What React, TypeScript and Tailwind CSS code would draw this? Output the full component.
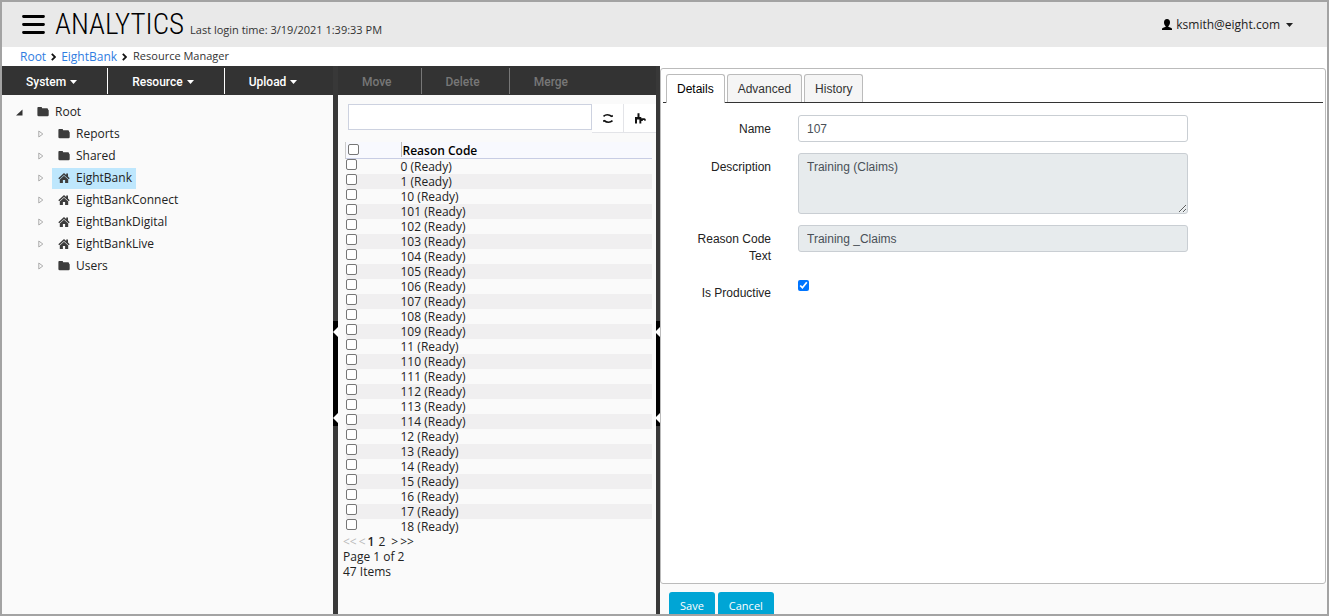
import React, { useState } from 'react';

const reasonCodes = [
  '0', '1', '10', '101', '102', '103', '104', '105', '106', '107', '108', '109', '11',
  '110', '111', '112', '113', '114', '12', '13', '14', '15', '16', '17', '18',
];

const treeItems = [
  { label: 'Reports', kind: 'folder' },
  { label: 'Shared', kind: 'folder' },
  { label: 'EightBank', kind: 'home' },
  { label: 'EightBankConnect', kind: 'home' },
  { label: 'EightBankDigital', kind: 'home' },
  { label: 'EightBankLive', kind: 'home' },
  { label: 'Users', kind: 'folder' },
];

function FolderIcon() {
  return (
    <svg className="h-[10px] w-3 shrink-0" viewBox="0 0 12 10" fill="#3c3c3c" aria-hidden="true">
      <path d="M1.2 0h3q.9 0 .9.9v.4h4.800q1.200 0 1.200 1.200v.3q.6.1.6.8v4.400q0 1.300-1.200 1.300H1.700Q.4 9.300.4 8V.9Q.4 0 1.200 0z" />
    </svg>
  );
}

function HomeIcon() {
  return (
    <svg className="h-[10px] w-3 shrink-0" viewBox="0 0 12 10" fill="#3c3c3c" aria-hidden="true">
      <path d="M6 0 0.300 5.200l1 1L6 2l4.700 4.200 1-1L10 3.600V.5H8.200v1.500z" />
      <path d="M6 2.700 1.800 6.500V10H4.900V7h2.200v3h3.100V6.500z" />
    </svg>
  );
}

function Caret() {
  return (
    <svg className="h-1 w-[7px]" viewBox="0 0 7 4" fill="currentColor" aria-hidden="true">
      <path d="M0 0h7L3.500 4z" />
    </svg>
  );
}

function Chevron() {
  return (
    <svg className="h-2 w-[5px]" viewBox="0 0 5 8" fill="none" stroke="#111" strokeWidth="1.8" aria-hidden="true">
      <path d="M0.800 0.800 4 4 0.800 7.200" />
    </svg>
  );
}

function Splitter({ className }: { className: string }) {
  return (
    <div role="separator" aria-orientation="vertical" className={`flex shrink-0 flex-col bg-[#383838] ${className}`}>
      <div className="grow-[255]" />
      <div className="flex h-[105px] flex-col items-end justify-between bg-black pt-1.5 pb-[3px]">
        {[0, 1].map((n) => (
          <svg key={n} className="h-2.5 w-[5px]" viewBox="0 0 5 10" fill="#fff" aria-hidden="true">
            <path d="M5 0v10L0 5z" />
          </svg>
        ))}
      </div>
      <div className="grow-[188]" />
    </div>
  );
}

const check =
  "block size-[11px] appearance-none rounded-[2px] border border-[#767676] bg-white checked:border-[#0075ff] checked:bg-[#0075ff]";

const field =
  'block w-full rounded-[3px] border border-[#c9ced3] px-2 text-xs text-[#495057]';

function Header() {
  return (
    <header className="flex h-[45px] shrink-0 items-center bg-[#e9e9e9]">
      <button aria-label="Menu" className="ml-5">
        <svg className="h-5 w-[23px]" viewBox="0 0 23 20" stroke="#000" strokeWidth="2.800" strokeLinecap="round" aria-hidden="true">
          <path d="M1.500 1.500h20M1.500 9.500h20M1.500 17.500h20" />
        </svg>
      </button>
      <div className="ml-2.5 flex items-baseline gap-1.5">
        <h1 className="font-['Roboto_Condensed','Roboto',sans-serif] text-[29px] leading-[45px] font-light text-black">
          ANALYTICS
        </h1>
        <p className="text-[11px] text-[#333]">Last login time: 3/19/2021 1:39:33 PM</p>
      </div>
      <button className="mr-[34px] ml-auto flex items-center gap-1 text-xs text-[#222]">
        <svg className="h-[11px] w-2.5" viewBox="0 0 10 11" fill="#000" aria-hidden="true">
          <path d="M5 0C3 0 2 1.300 2 3.300c0 1.600.6 3.200 1.700 3.900v.5L.6 9Q0 9.300 0 10v1h10v-1q0-.7-.6-1L6.300 7.700v-.5C7.400 6.500 8 4.900 8 3.300 8 1.300 7 0 5 0z" />
        </svg>
        ksmith@eight.com
        <span className="ml-0.5"><Caret /></span>
      </button>
    </header>
  );
}

function Tree() {
  const [selected, setSelected] = useState('EightBank');
  return (
    <ul className="pt-1.5 text-xs text-[#222]">
      <li>
        <div className="flex h-[22px] items-center pl-3.5">
          <svg className="mr-3.5 size-[7px]" viewBox="0 0 7 7" fill="#333" aria-hidden="true">
            <path d="M6.500 0.500v6H0z" />
          </svg>
          <FolderIcon />
          <span className="ml-1.5">Root</span>
        </div>
        <ul>
          {treeItems.map((item) => (
            <li key={item.label} className="flex h-[22px] items-center pl-9">
              <svg className="mr-2 h-2 w-1.5" viewBox="0 0 6 8" fill="none" stroke="#aaa" aria-hidden="true">
                <path d="M.8 1v6L4.800 4z" />
              </svg>
              <button
                onClick={() => setSelected(item.label)}
                className={`flex h-[21px] items-center gap-1.5 px-1 pl-1.5 ${selected === item.label ? 'bg-[#bee7fd]' : ''}`}
              >
                {item.kind === 'folder' ? <FolderIcon /> : <HomeIcon />}
                {item.label}
              </button>
            </li>
          ))}
        </ul>
      </li>
    </ul>
  );
}

function ReasonTable() {
  return (
    <table className="mr-1 ml-[7px] w-[307px] table-fixed border-collapse text-xs leading-[15px] text-[#222]">
      <thead>
        <tr className="h-4 border-b border-[#c8cde4] bg-[#f8f9fe]">
          <th className="w-[55px] border-l border-[#ccc] p-0 pl-[2px]">
            <input type="checkbox" aria-label="Select all" className={check} />
          </th>
          <th className="p-0 text-left font-semibold text-black">
            <span className="block border-l border-[#bbb] pt-0.5 pl-[1px] leading-[13px]">Reason Code</span>
          </th>
        </tr>
      </thead>
      <tbody>
        {reasonCodes.map((code, i) => (
          <tr key={code} className={`h-[15px] ${i % 2 ? 'bg-[#f0eff0]' : ''}`}>
            <td className="p-0 align-top">
              <input type="checkbox" aria-label={`Select ${code}`} className={check} />
            </td>
            <td className="p-0">{code} (Ready)</td>
          </tr>
        ))}
      </tbody>
    </table>
  );
}

function Details() {
  return (
    <form id="details" className="grid grid-cols-[108px_1fr] gap-x-[27px] gap-y-[11px] pt-3 pr-[135px] text-xs leading-[17px] text-[#222]">
      <label htmlFor="name" className="pt-1.5 text-right">Name</label>
      <input id="name" defaultValue="107" className={`${field} h-[27px] bg-white`} />
      <label htmlFor="description" className="pt-1.5 text-right">Description</label>
      <textarea id="description" readOnly defaultValue="Training (Claims)" className={`${field} h-[61px] resize bg-[#e7ebed] pt-[5px]`} />
      <label htmlFor="reason" className="pt-1.5 pl-8 text-right">Reason Code Text</label>
      <input id="reason" readOnly defaultValue="Training _Claims" className={`${field} h-[27px] bg-[#e7ebed]`} />
      <label htmlFor="productive" className="pt-[9px] text-right">Is Productive</label>
      <input id="productive" type="checkbox" defaultChecked className="mt-1 size-[11px] accent-[#0075ff]" />
    </form>
  );
}

export default function App() {
  const [tab, setTab] = useState('Details');
  return (
    <div className="flex h-screen flex-col overflow-hidden border-2 border-[#a3a3a3] bg-white font-['Open_Sans',sans-serif]">
      <Header />
      <nav aria-label="Breadcrumb" className="flex h-[19px] shrink-0 items-center gap-[5px] pl-[18px] text-xs">
        <a href="#root" className="text-[#2f7de1]">Root</a>
        <Chevron />
        <a href="#eightbank" className="text-[#2f7de1]">EightBank</a>
        <Chevron />
        <span className="ml-px text-[11px] text-[#333]">Resource Manager</span>
      </nav>

      <main className="flex min-h-0 flex-1">
        <section className="w-[331px] shrink-0 bg-[#fafafa]">
          <div className="flex h-[29px] items-center bg-[#333] font-['Roboto',sans-serif] text-xs font-medium text-white">
            {['System', 'Resource', 'Upload'].map((name) => (
              <button key={name} className="flex h-[26px] items-center gap-1 border-r border-white pt-0.5 pr-[30px] pl-6 last:border-0">
                {name}
                <Caret />
              </button>
            ))}
          </div>
          <Tree />
        </section>
        <Splitter className="w-[5px]" />

        <section className="w-[318px] shrink-0 bg-[#fafafa]">
          <div className="flex h-[29px] items-center bg-[#333] font-['Roboto',sans-serif] text-xs font-medium text-[#777]">
            {['Move', 'Delete', 'Merge'].map((name) => (
              <button key={name} disabled className="h-[26px] border-r border-[#777] pt-0.5 pr-[29px] pl-6 last:border-0">
                {name}
              </button>
            ))}
          </div>
          <div className="flex items-start pt-[9px] pb-[9px] pl-2.5">
            <input aria-label="Search" className="h-[26px] min-w-0 flex-1 border border-[#cdd2e0] bg-white px-2 text-xs" />
            <button aria-label="Refresh" className="flex h-[29px] w-8 items-center justify-center border-r border-b border-[#e3e4e8] bg-white">
              <svg className="h-[11px] w-3" viewBox="0 0 12 11" fill="none" stroke="#111" strokeWidth="1.600" aria-hidden="true">
                <path d="M1.500 3.300Q3.200 1.700 5.400 1.700T10 3.500M10.500 7.700Q8.800 9.300 6.600 9.300T2 7.500" />
                <path d="M10.800 1.800v2.200H8.400zM1.200 9.200V7H3.600z" fill="#111" stroke="none" />
              </svg>
            </button>
            <button aria-label="Plugins" className="flex h-[29px] w-8 items-center justify-center border-b border-[#e3e4e8] bg-white">
              <svg className="h-[11px] w-3" viewBox="0 0 12 11" fill="#111" aria-hidden="true">
                <path d="M1 10.500V4H3.500V0.300H5.500V4H7.300V5.200H10.500L11.700 6V7.800H10.200V7H8.800V8H7.300V10.500H5.400V6.500H3V10.500z" />
              </svg>
            </button>
          </div>
          <ReasonTable />
          <div className="pl-[5px] text-xs leading-[15px] text-[#222]">
            <p className="flex gap-0.5">
              <span className="text-[#bbb]">&lt;&lt;</span>
              <span className="text-[#bbb]">&lt;</span>
              <b className="font-semibold">1</b>
              <a href="#page2" className="ml-0.5">2</a>
              <a href="#next" className="ml-1">&gt;</a>
              <a href="#last">&gt;&gt;</a>
            </p>
            <p>Page 1 of 2</p>
            <p>47 Items</p>
          </div>
        </section>
        <Splitter className="w-1" />

        <section className="flex min-w-0 flex-1 flex-col bg-[#fafafa]">
          <div className="flex-1 bg-white pt-0.5 pr-px">
            <div className="h-full rounded-[3px] border border-[#bbb] bg-white px-0.5 pt-[5px] font-['Liberation_Sans',sans-serif]">
              <div role="tablist" className="flex items-end gap-0.5 border-b border-[#333] pl-[3px] text-xs text-[#333]">
                {['Details', 'Advanced', 'History'].map((name) => (
                  <button
                    key={name}
                    role="tab"
                    aria-selected={tab === name}
                    onClick={() => setTab(name)}
                    className={`rounded-t-[3px] border border-b-0 border-[#bbb] px-2.5 ${tab === name ? '-mb-px h-[29px] bg-white text-black' : 'h-7 bg-[#f5f5f5]'}`}
                  >
                    {name}
                  </button>
                ))}
              </div>
              <Details />
            </div>
          </div>
          <div className="flex h-[30px] shrink-0 items-start gap-[3px] overflow-hidden pt-2 pl-[9px] text-[11px] text-white">
            <button type="submit" form="details" className="h-7 shrink-0 rounded-[3px] bg-[#00a5d5] px-[11px]">Save</button>
            <button className="h-7 shrink-0 rounded-[3px] bg-[#00a5d5] px-[11px]">Cancel</button>
          </div>
        </section>
      </main>
    </div>
  );
}
